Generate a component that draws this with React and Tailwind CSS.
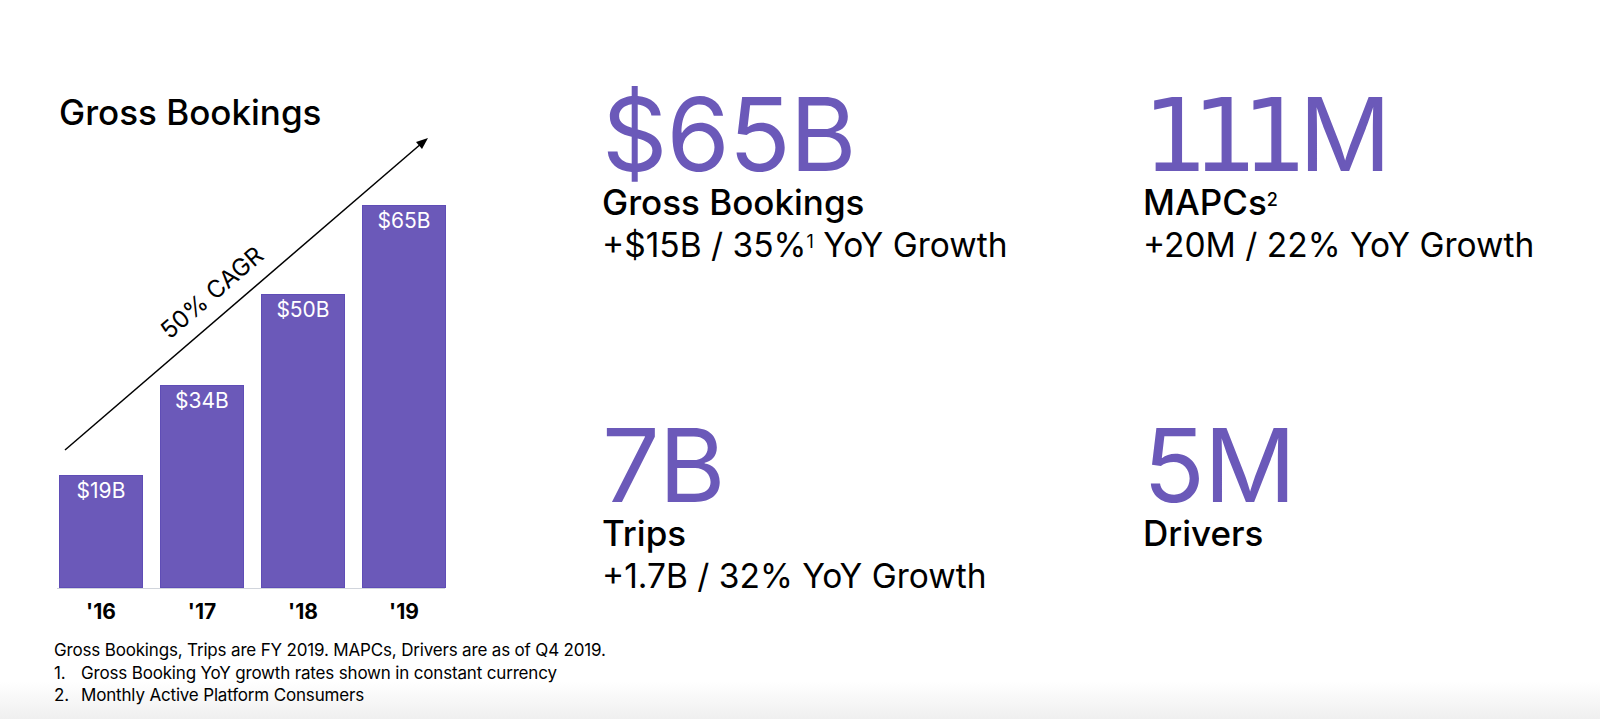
const bars = [
  { year: "'16", label: '$19B', h: 113 },
  { year: "'17", label: '$34B', h: 203 },
  { year: "'18", label: '$50B', h: 294 },
  { year: "'19", label: '$65B', h: 383 },
];

function Chart() {
  return (
    <div>
      <div className="relative h-[458px]">
        <svg className="absolute left-0 top-0 overflow-visible" viewBox="0 0 548 458" width="548" height="458">
          <line x1="11" y1="320" x2="368" y2="13" stroke="#000" strokeWidth="1.5" />
          <polygon points="374,8 362,12 368,19" fill="#000" />
          <text
            x="159"
            y="164"
            transform="rotate(-40.7 159 164)"
            textAnchor="middle"
            dominantBaseline="middle"
            fontSize="24"
            fontFamily="Inter, sans-serif"
            fill="#000"
          >
            50% CAGR
          </text>
        </svg>
        <div className="flex h-full items-end gap-[17px] pl-[5px]">
          {bars.map((b) => (
            <div
              key={b.year}
              className="w-[84px] border border-[#5f4db6] bg-[#6b59b9] pt-[4px] text-center text-[21px] leading-none text-white"
              style={{ height: b.h }}
            >
              {b.label}
            </div>
          ))}
        </div>
      </div>
      <div className="ml-[3px] h-px w-[388px] bg-gray-300" />
      <div className="mt-[12px] flex gap-[17px] pl-[5px]">
        {bars.map((b) => (
          <div key={b.year} className="w-[84px] text-center text-[21px] font-bold leading-none">
            {b.year}
          </div>
        ))}
      </div>
    </div>
  );
}

function Stat({ value, label, sub }) {
  return (
    <div>
      <div className="h-[96px] text-[102px] leading-[96px] tracking-[-0.01em] text-[#6b59b9]">{value}</div>
      <div className="mt-[3px] text-[35px] font-medium leading-none">{label}</div>
      {sub && <div className="mt-[9px] text-[33.5px] leading-none">{sub}</div>}
    </div>
  );
}

export default function App() {
  return (
    <div className="flex h-[719px] w-full overflow-hidden bg-[linear-gradient(180deg,#ffffff_0px,#ffffff_682px,#efefef_719px)] text-black [font-family:Inter,sans-serif]">
      <div className="w-[602px] shrink-0 pl-[54px] pt-[95px]">
        <h1 className="pl-[5px] text-[35px] font-medium leading-none">Gross Bookings</h1>
        <Chart />
        <div className="mt-[17px] whitespace-nowrap text-[17px] leading-[22.5px] tracking-[-0.01em]">
          <p>Gross Bookings, Trips are FY 2019. MAPCs, Drivers are as of Q4 2019.</p>
          <div className="flex">
            <span className="w-[27px]">1.</span>
            <span>Gross Booking YoY growth rates shown in constant currency</span>
          </div>
          <div className="flex">
            <span className="w-[27px]">2.</span>
            <span>Monthly Active Platform Consumers</span>
          </div>
        </div>
      </div>
      <div className="grid flex-1 grid-cols-[541px_1fr] content-start gap-y-[154px] pt-[86px]">
        <Stat
          value="$65B"
          label="Gross Bookings"
          sub={
            <>
              +$15B / 35%<sup className="text-[18px]">1</sup> YoY Growth
            </>
          }
        />
        <Stat
          value={
            <>
              <span className="tracking-[-0.15em] [font-family:'DejaVu_Sans',sans-serif]">11</span>
              <span className="tracking-[-0.08em] [font-family:'DejaVu_Sans',sans-serif]">1</span>M
            </>
          }
          label={
            <>
              MAPCs<sup className="text-[18px]">2</sup>
            </>
          }
          sub="+20M / 22% YoY Growth"
        />
        <Stat value="7B" label="Trips" sub="+1.7B / 32% YoY Growth" />
        <Stat value="5M" label="Drivers" />
      </div>
    </div>
  );
}
